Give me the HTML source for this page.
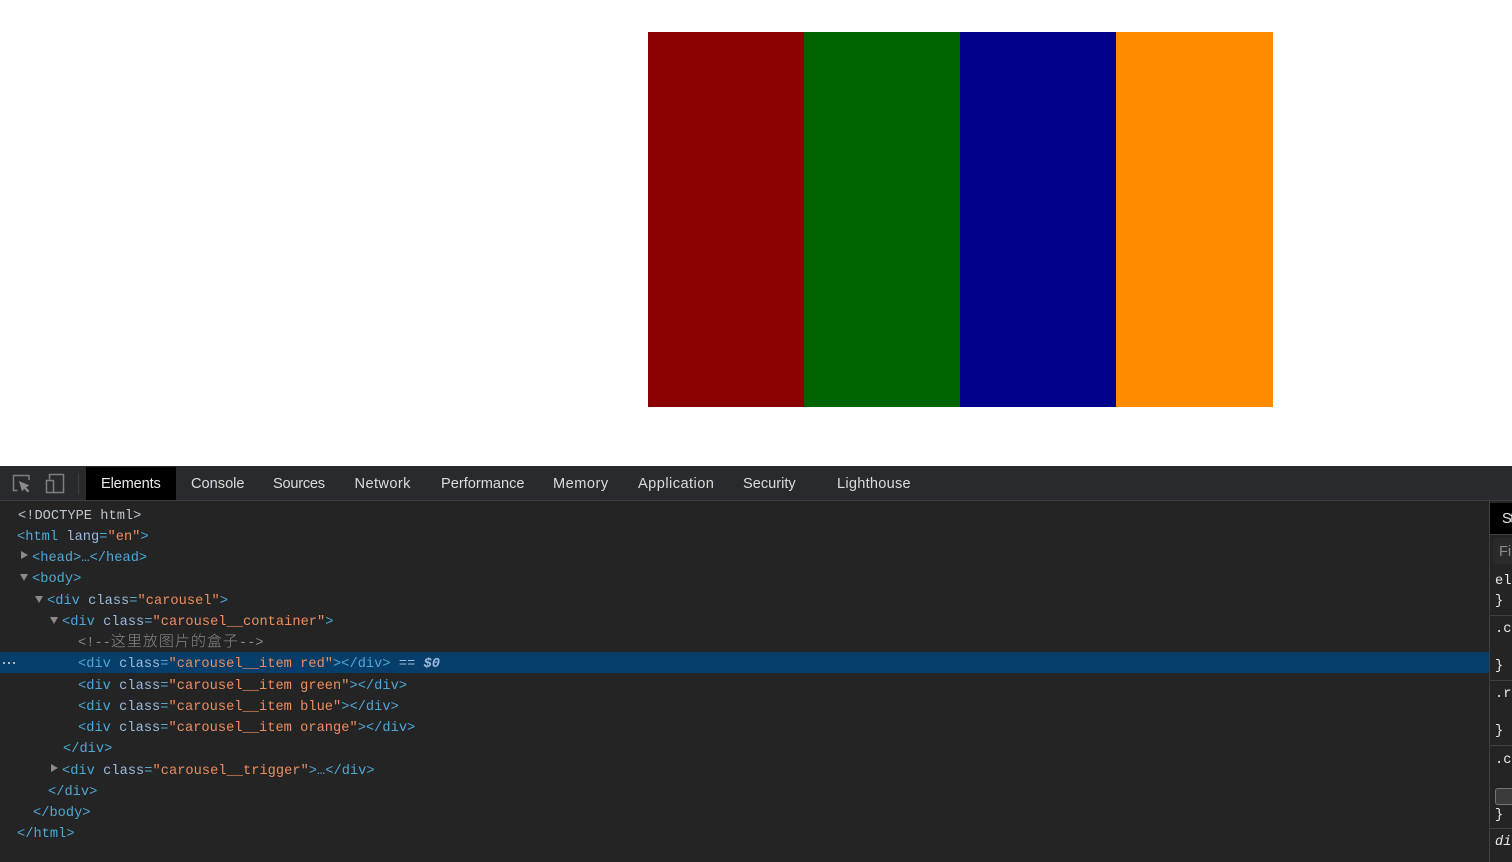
<!DOCTYPE html>
<html lang="en">
<head>
<meta charset="utf-8">
<title>Carousel DevTools</title>
<style>
html,body{margin:0;padding:0;width:1512px;height:862px;overflow:hidden;background:#fff}
body{position:relative;font-family:"Liberation Sans",sans-serif}
.a{position:absolute}
.tab{position:absolute;top:466px;height:34px;line-height:37px;font-size:14.6px;color:#dadce0;white-space:nowrap}
.l{position:absolute;margin-top:1px;height:21px;line-height:21px;font-family:"Liberation Mono","Noto Sans CJK SC",monospace;font-size:13.67px;letter-spacing:.03px;white-space:pre;color:#4fa8d8}
.n{color:#9bbbdc}.v{color:#f08d5e}.g{color:#bdc6cf}.c{color:#898989}
.cjk{font-family:"Noto Sans CJK SC",sans-serif;font-size:15px;letter-spacing:1px;font-weight:300;line-height:0}
.tri{position:absolute;width:0;height:0}
.r{border-left:7px solid #8a8a8a;border-top:4.5px solid transparent;border-bottom:4.5px solid transparent}
.d{border-top:7px solid #8a8a8a;border-left:4px solid transparent;border-right:4px solid transparent}
.sep{position:absolute;left:1490px;width:22px;height:1px;background:#3f4042}
.s{position:absolute;left:1495px;margin-top:1px;height:21px;line-height:21px;font-family:"Liberation Mono",monospace;font-size:13.67px;color:#e8eaed;white-space:pre}
</style>
</head>
<body>
<div class="a" style="left:648px;top:32px;width:156px;height:375px;background:#8b0000"></div>
<div class="a" style="left:804px;top:32px;width:156px;height:375px;background:#006400"></div>
<div class="a" style="left:960px;top:32px;width:156px;height:375px;background:#00008b"></div>
<div class="a" style="left:1116px;top:32px;width:157px;height:375px;background:#ff8c00"></div>

<div class="a" style="left:0;top:466px;width:1512px;height:396px;background:#242424"></div>
<div class="a" style="left:0;top:466px;width:1512px;height:34px;background:#292a2d"></div>
<div class="a" style="left:0;top:500px;width:1512px;height:1px;background:#3c3d40"></div>

<svg class="a" style="left:10px;top:470px" width="60" height="28" viewBox="0 0 60 28">
<path d="M7.500 20.500H3.500V5.500H19V10" fill="none" stroke="#7f7f7f" stroke-width="1.500"/>
<path d="M9 11L19.500 15.500L16 17.300L19.500 21L17.500 22.500L14.300 18.800L12 21.500Z" fill="#8a8a8a"/>
<path d="M39.500 9.500V4.500H53.500V22.500H43.500" fill="none" stroke="#7f7f7f" stroke-width="1.500"/>
<rect x="36.500" y="10.500" width="7" height="12" fill="none" stroke="#7f7f7f" stroke-width="1.500"/>
</svg>
<div class="a" style="left:78px;top:473px;width:1px;height:21px;background:#3f4042"></div>

<div class="a" style="left:86px;top:467px;width:90px;height:33px;background:#000"></div>
<div class="tab" style="left:101px;color:#e8eaed;letter-spacing:-.15px">Elements</div>
<div class="tab" style="left:191px">Console</div>
<div class="tab" style="left:273px;letter-spacing:-.25px">Sources</div>
<div class="tab" style="left:354.500px;letter-spacing:.4px">Network</div>
<div class="tab" style="left:441px">Performance</div>
<div class="tab" style="left:553px;letter-spacing:.5px">Memory</div>
<div class="tab" style="left:638px;letter-spacing:.45px">Application</div>
<div class="tab" style="left:743px">Security</div>
<div class="tab" style="left:837px;letter-spacing:.25px">Lighthouse</div>

<div class="a" style="left:0;top:652px;width:1489px;height:21px;background:#073d69"></div>
<div class="a" style="left:3px;top:662px;width:2px;height:2px;background:#a9b9c6;box-shadow:5px 0 #a9b9c6,10px 0 #a9b9c6"></div>

<div class="tri r" style="left:21px;top:551px"></div>
<div class="tri d" style="left:20px;top:574px"></div>
<div class="tri d" style="left:35px;top:596px"></div>
<div class="tri d" style="left:50px;top:617px"></div>
<div class="tri r" style="left:51px;top:764px"></div>

<div class="l g" style="left:18px;top:505px">&lt;!DOCTYPE html&gt;</div>
<div class="l" style="left:17px;top:526px">&lt;html <span class="n">lang</span>=<span class="v">"en"</span>&gt;</div>
<div class="l" style="left:32px;top:547px">&lt;head&gt;…&lt;/head&gt;</div>
<div class="l" style="left:32px;top:568px">&lt;body&gt;</div>
<div class="l" style="left:47px;top:590px">&lt;div <span class="n">class</span>=<span class="v">"carousel"</span>&gt;</div>
<div class="l" style="left:62px;top:611px">&lt;div <span class="n">class</span>=<span class="v">"carousel__container"</span>&gt;</div>
<div class="l c" style="left:78px;top:632px">&lt;!--<span class="cjk">这里放图片的盒子</span>--&gt;</div>
<div class="l" style="left:78px;top:653px">&lt;div <span class="n">class</span>=<span class="v">"carousel__item red"</span>&gt;&lt;/div&gt; <span class="n">==</span> <i class="n" style="font-weight:bold">$0</i></div>
<div class="l" style="left:78px;top:675px">&lt;div <span class="n">class</span>=<span class="v">"carousel__item green"</span>&gt;&lt;/div&gt;</div>
<div class="l" style="left:78px;top:696px">&lt;div <span class="n">class</span>=<span class="v">"carousel__item blue"</span>&gt;&lt;/div&gt;</div>
<div class="l" style="left:78px;top:717px">&lt;div <span class="n">class</span>=<span class="v">"carousel__item orange"</span>&gt;&lt;/div&gt;</div>
<div class="l" style="left:63px;top:738px">&lt;/div&gt;</div>
<div class="l" style="left:62px;top:760px">&lt;div <span class="n">class</span>=<span class="v">"carousel__trigger"</span>&gt;…&lt;/div&gt;</div>
<div class="l" style="left:48px;top:781px">&lt;/div&gt;</div>
<div class="l" style="left:33px;top:802px">&lt;/body&gt;</div>
<div class="l" style="left:17px;top:823px">&lt;/html&gt;</div>

<div class="a" style="left:1489px;top:501px;width:23px;height:361px;background:#242424;overflow:hidden">
  <div class="a" style="left:1px;top:2px;width:22px;height:31px;background:#000"></div>
  <div class="a" style="left:13px;top:6px;height:24px;line-height:24px;font-size:14.6px;letter-spacing:-1.500px;color:#e8eaed;white-space:nowrap">St</div>
  <div class="a" style="left:1px;top:33px;width:22px;height:1px;background:#3c3d40"></div>
  <div class="a" style="left:4px;top:37px;width:19px;height:26px;background:#2a2a2a"></div>
  <div class="a" style="left:10px;top:39px;height:24px;line-height:24px;font-size:14.6px;color:#8a8a8a">Fil</div>
</div>
<div class="a" style="left:1489px;top:501px;width:1px;height:361px;background:#3f4042"></div>

<div class="sep" style="top:615px"></div>
<div class="sep" style="top:680px"></div>
<div class="sep" style="top:745px"></div>
<div class="sep" style="top:828px"></div>

<div class="s" style="top:570px;width:17px;overflow:hidden">el</div>
<div class="s" style="top:590px">}</div>
<div class="s" style="top:618px;width:17px;overflow:hidden">.c</div>
<div class="s" style="top:655px">}</div>
<div class="s" style="top:683px;width:17px;overflow:hidden">.r</div>
<div class="s" style="top:720px">}</div>
<div class="s" style="top:749px;width:17px;overflow:hidden">.c</div>
<div class="a" style="left:1495px;top:788px;width:17px;height:17px;background:#3b3b3b;border:1px solid #757575;border-right:0;border-radius:3px 0 0 3px;box-sizing:border-box"></div>
<div class="s" style="top:804px">}</div>
<div class="s" style="top:831px;width:17px;overflow:hidden;font-style:italic">di</div>
</body>
</html>
